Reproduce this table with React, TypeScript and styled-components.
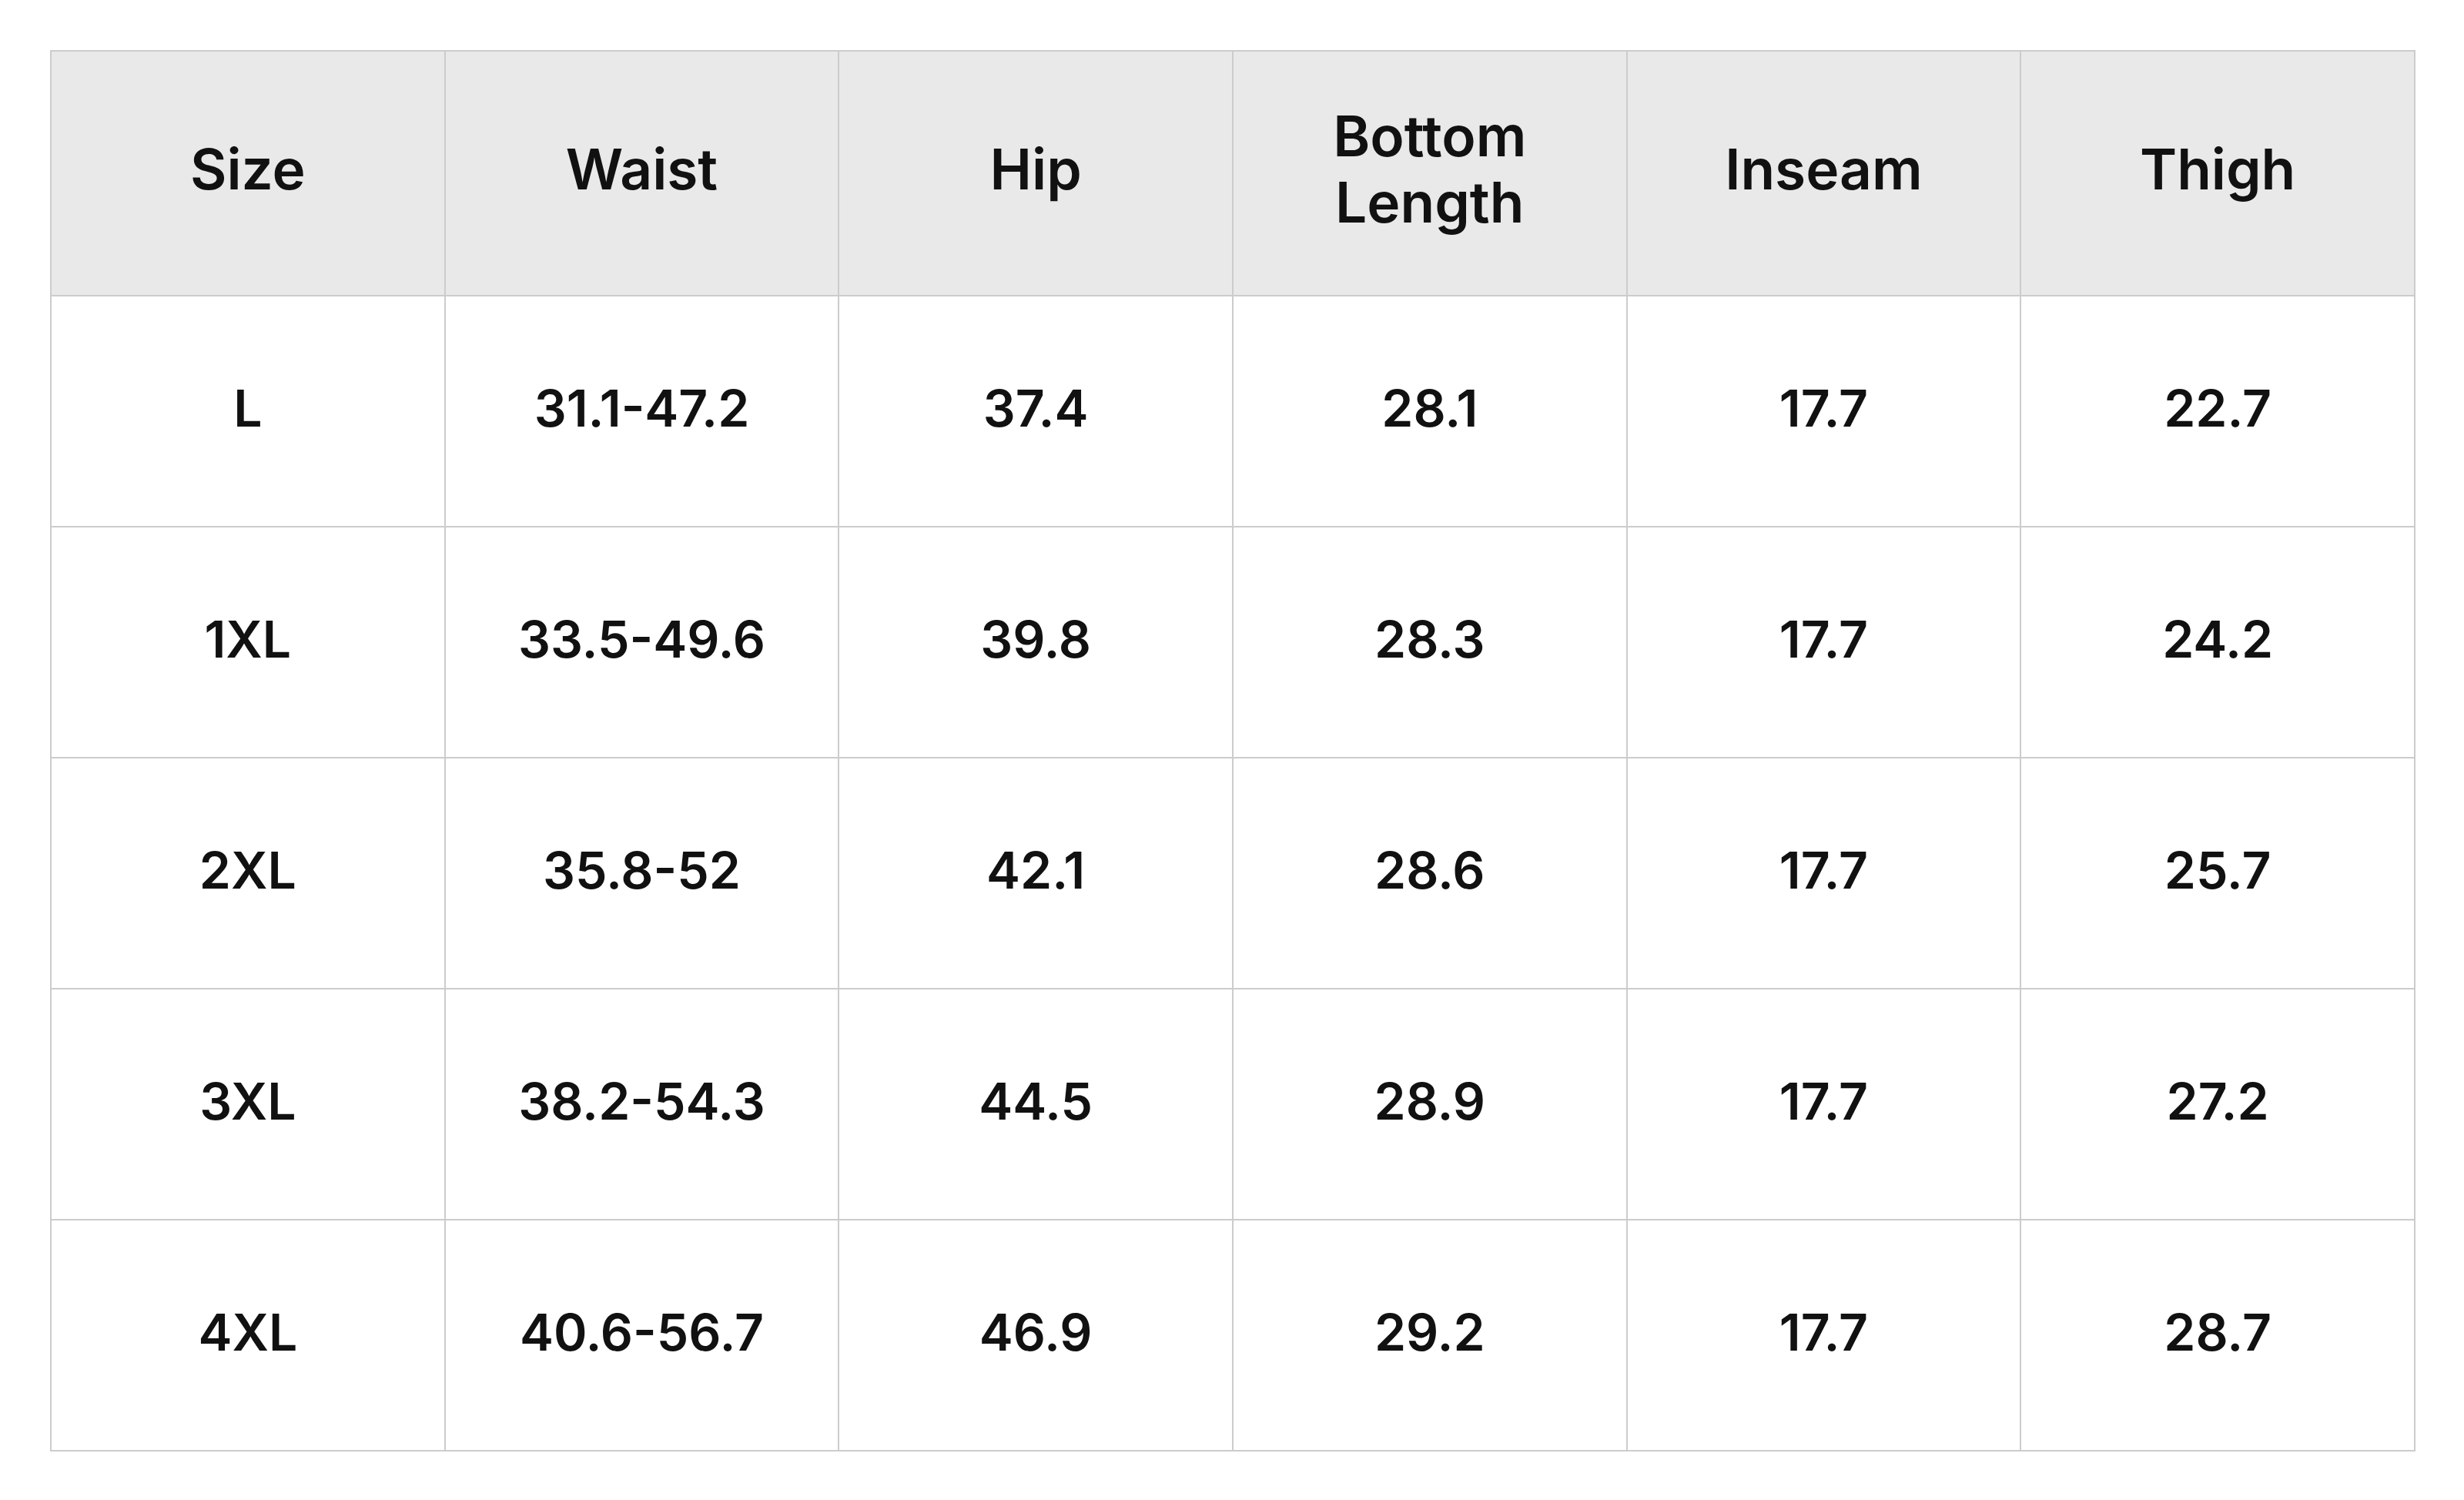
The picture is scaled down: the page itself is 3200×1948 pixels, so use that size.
import React from "react";
import styled, { createGlobalStyle } from "styled-components";

const Global = createGlobalStyle`
  html, body { margin: 0; padding: 0; background: #ffffff; }
  body { font-family: Inter, "Noto Sans", sans-serif; }
`;

const Page = styled.div`
  padding: 65px 63px 64px 65px;
`;

const Table = styled.table`
  width: 3072px;
  border-collapse: collapse;
  table-layout: fixed;
  color: #111111;
`;

const HeadCell = styled.th`
  height: 318px;
  box-sizing: border-box;
  background: #e9e9e9;
  border: 2px solid #cccccc;
  font-size: 73px;
  line-height: 86px;
  font-weight: 600;
  text-align: center;
  vertical-align: middle;
  padding: 0 60px 10px;
`;

const Cell = styled.td`
  height: 300px;
  box-sizing: border-box;
  border: 2px solid #cccccc;
  font-size: 66px;
  font-weight: 600;
  text-align: center;
  vertical-align: middle;
  padding: 0 0 9px;
`;

const headers = ["Size", "Waist", "Hip", "Bottom Length", "Inseam", "Thigh"];
const rows = [
  ["L", "31.1-47.2", "37.4", "28.1", "17.7", "22.7"],
  ["1XL", "33.5-49.6", "39.8", "28.3", "17.7", "24.2"],
  ["2XL", "35.8-52", "42.1", "28.6", "17.7", "25.7"],
  ["3XL", "38.2-54.3", "44.5", "28.9", "17.7", "27.2"],
  ["4XL", "40.6-56.7", "46.9", "29.2", "17.7", "28.7"],
];

export default function App() {
  return (
    <>
      <Global />
      <Page>
        <Table>
          <thead>
            <tr>
              {headers.map((h) => (
                <HeadCell key={h}>{h}</HeadCell>
              ))}
            </tr>
          </thead>
          <tbody>
            {rows.map((r) => (
              <tr key={r[0]}>
                {r.map((c, i) => (
                  <Cell key={i}>{c}</Cell>
                ))}
              </tr>
            ))}
          </tbody>
        </Table>
      </Page>
    </>
  );
}
